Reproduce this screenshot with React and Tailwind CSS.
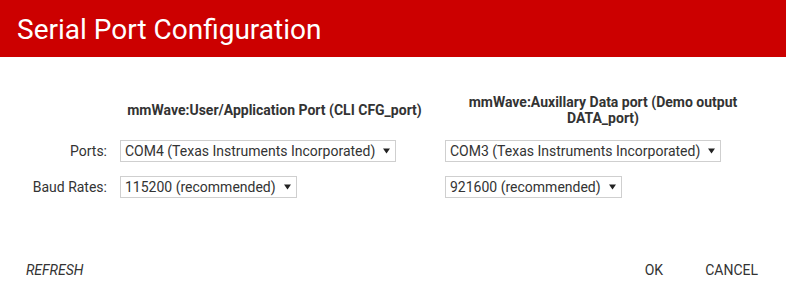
import React from 'react';

const Caret = () => (
  <svg width="7" height="6" viewBox="0 0 7 6" className="ml-[8px] shrink-0">
    <path d="M0 0.5 L7 0.5 L3.5 5.5 Z" fill="#222" />
  </svg>
);

const FakeSelect = ({ value }) => (
  <div className="inline-flex items-center h-[22px] border border-[#cfcfcf] bg-white pl-[4px] pr-[5px] text-[14px] text-[#333] leading-none whitespace-nowrap">
    <span>{value}</span>
    <Caret />
  </div>
);

const App = () => {
  return (
    <div className="w-[786px] h-[301px] bg-white flex flex-col" style={{ fontFamily: 'Roboto, "Liberation Sans", sans-serif' }}>
      <div className="h-[57px] bg-[#cc0000] flex items-center px-[17px] shrink-0">
        <h1 className="text-white text-[28px] leading-none pt-[2px]">Serial Port Configuration</h1>
      </div>

      <div className="grid grid-cols-[108px_337px_316px] items-center pt-[37px] text-[14px] text-[#333]">
        <div />
        <div className="text-center font-bold leading-[16px] pr-[4px]">mmWave:User/Application Port (CLI CFG_port)</div>
        <div className="text-center font-bold leading-[16px]">mmWave:Auxillary Data port (Demo output DATA_port)</div>

        <div className="text-right pr-[1px] mt-[14px]">Ports:</div>
        <div className="pl-[12px] mt-[14px]"><FakeSelect value="COM4 (Texas Instruments Incorporated)" /></div>
        <div className="mt-[14px]"><FakeSelect value="COM3 (Texas Instruments Incorporated)" /></div>

        <div className="text-right pr-[1px] mt-[14px]">Baud Rates:</div>
        <div className="pl-[12px] mt-[14px]"><FakeSelect value="115200 (recommended)" /></div>
        <div className="mt-[14px]"><FakeSelect value="921600 (recommended)" /></div>
      </div>

      <div className="mt-auto mb-[20px] flex items-center justify-between px-[26px] text-[14px] text-[#333]">
        <button className="italic uppercase">Refresh</button>
        <div className="flex items-center gap-[42px] pr-[2px]">
          <button className="uppercase">OK</button>
          <button className="uppercase">Cancel</button>
        </div>
      </div>
    </div>
  );
};

export default App;
